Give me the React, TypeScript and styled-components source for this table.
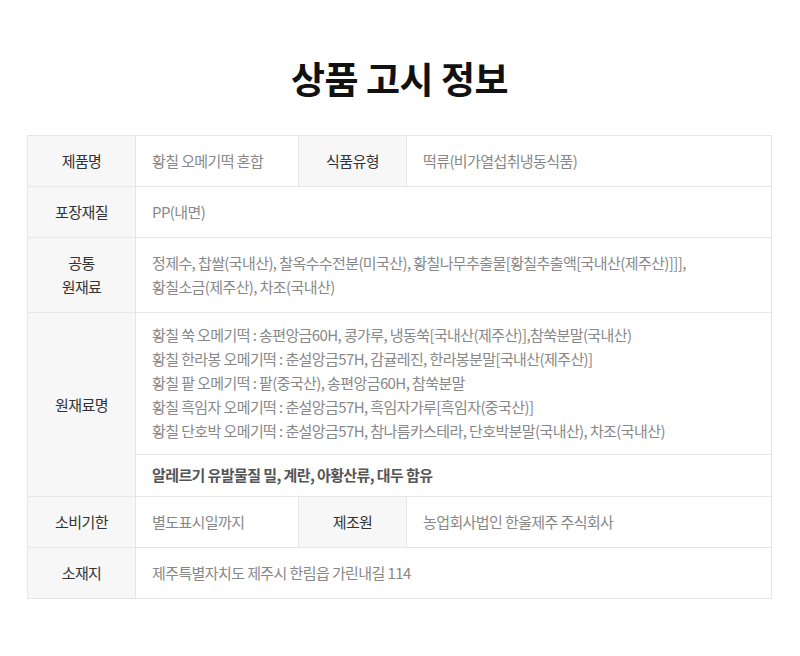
import styled, { createGlobalStyle } from "styled-components";

const GlobalStyle = createGlobalStyle`
  html, body {
    margin: 0;
    padding: 0;
    background: #fff;
  }
  body {
    font-family: 'Noto Sans CJK KR', 'Noto Sans', sans-serif;
  }
`;

const Page = styled.div`
  width: 800px;
  box-sizing: border-box;
  padding: 54px 28px 0 27px;
`;

const Title = styled.h2`
  margin: 0 0 33px;
  font-size: 37px;
  line-height: 48px;
  font-weight: 700;
  color: #111;
  text-align: center;
  letter-spacing: -0.5px;
`;

const Table = styled.table`
  width: 100%;
  border-collapse: collapse;
  table-layout: fixed;
  border: 1px solid #e6e6e6;
  font-size: 15px;
  line-height: 24px;
  letter-spacing: -0.6px;
`;

const Th = styled.th`
  background: #f7f7f7;
  color: #333;
  font-weight: 400;
  text-align: center;
  vertical-align: middle;
  padding: 13px 10px;
  border: 1px solid #e6e6e6;
`;

const Td = styled.td<{ $pad?: [number, number]; $strong?: boolean }>`
  color: ${p => (p.$strong ? "#555" : "#888")};
  font-weight: ${p => (p.$strong ? 700 : 400)};
  text-align: left;
  vertical-align: middle;
  padding: ${p => (p.$pad ? `${p.$pad[0]}px 16px ${p.$pad[1]}px` : "13px 16px")};
  border: 1px solid #e6e6e6;
`;

const Line = styled.div``;

const mixLines = [
  "황칠 쑥 오메기떡 : 송편앙금60H, 콩가루, 냉동쑥[국내산(제주산)],참쑥분말(국내산)",
  "황칠 한라봉 오메기떡 : 춘설앙금57H, 감귤레진, 한라봉분말[국내산(제주산)]",
  "황칠 팥 오메기떡 : 팥(중국산), 송편앙금60H, 참쑥분말",
  "황칠 흑임자 오메기떡 : 춘설앙금57H, 흑임자가루[흑임자(중국산)]",
  "황칠 단호박 오메기떡 : 춘설앙금57H, 참나름카스테라, 단호박분말(국내산), 차조(국내산)",
];

export default function App() {
  return (
    <Page>
      <GlobalStyle />
      <Title>상품 고시 정보</Title>
      <Table>
        <colgroup>
          <col style={{ width: 108 }} />
          <col style={{ width: 163 }} />
          <col style={{ width: 108 }} />
          <col />
        </colgroup>
        <tbody>
          <tr>
            <Th>제품명</Th>
            <Td>황칠 오메기떡 혼합</Td>
            <Th>식품유형</Th>
            <Td>떡류(비가열섭취냉동식품)</Td>
          </tr>
          <tr>
            <Th>포장재질</Th>
            <Td colSpan={3}>PP(내면)</Td>
          </tr>
          <tr>
            <Th>
              공통
              <br />
              원재료
            </Th>
            <Td colSpan={3}>
              정제수, 찹쌀(국내산), 찰옥수수전분(미국산), 황칠나무추출물[황칠추출액[국내산(제주산)]]],
              <br />
              황칠소금(제주산), 차조(국내산)
            </Td>
          </tr>
          <tr>
            <Th rowSpan={2}>원재료명</Th>
            <Td colSpan={3} $pad={[10, 11]}>
              {mixLines.map(l => (
                <Line key={l}>{l}</Line>
              ))}
            </Td>
          </tr>
          <tr>
            <Td colSpan={3} $pad={[8, 9]} $strong>
              알레르기 유발물질 밀, 계란, 아황산류, 대두 함유
            </Td>
          </tr>
          <tr>
            <Th>소비기한</Th>
            <Td>별도표시일까지</Td>
            <Th>제조원</Th>
            <Td>농업회사법인 한울제주 주식회사</Td>
          </tr>
          <tr>
            <Th>소재지</Th>
            <Td colSpan={3}>제주특별자치도 제주시 한림읍 가린내길 114</Td>
          </tr>
        </tbody>
      </Table>
    </Page>
  );
}
